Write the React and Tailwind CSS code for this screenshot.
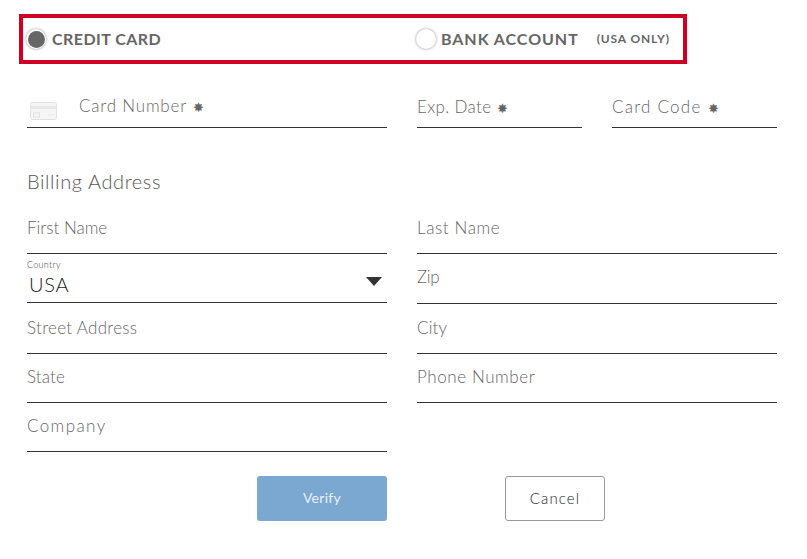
const font = { fontFamily: '"Lato", "Liberation Sans", sans-serif' };

function Star() {
  return <span className="ml-[6px] text-[13px] font-normal leading-none tracking-normal text-[#666]">✸</span>;
}

function Field({ label, h = "h-[49px]", pt = "pt-[12px]", track = "tracking-[0.5px]" }) {
  return (
    <div className={`${h} ${pt} border-b border-[#333] text-[17px] font-light leading-[22px] ${track} text-[#666]`}>
      {label}
    </div>
  );
}

function Radio({ checked }) {
  return (
    <span className="flex h-[20px] w-[20px] shrink-0 items-center justify-center rounded-full bg-white shadow-[0_0_3px_rgba(0,0,0,0.45)]">
      {checked && <span className="h-[17px] w-[17px] rounded-full bg-[#666]" />}
    </span>
  );
}

export default function App() {
  return (
    <div style={font} className="h-[559px] w-[807px] bg-white pl-[27px] pr-[30px] pt-[14px]">
      <div className="-ml-[8px] flex h-[50px] w-[668px] items-center border-[4px] border-[#cf0022] pl-[3px]">
        <div className="flex w-[390px] items-center gap-[6px]">
          <Radio checked />
          <span className="text-[16px] font-bold tracking-[0.45px] text-[#666]">CREDIT CARD</span>
        </div>
        <div className="flex items-center gap-[5px]">
          <Radio />
          <span className="text-[16px] font-bold tracking-[0.95px] text-[#666]">BANK ACCOUNT</span>
          <span className="ml-[13px] text-[12px] font-bold tracking-[0.85px] text-[#666]">(USA ONLY)</span>
        </div>
      </div>

      <div className="mt-[29px] flex gap-[30px]">
        <div className="flex h-[35px] w-[360px] items-start border-b border-[#333] pt-[2px]">
          <svg width="27" height="20" viewBox="0 0 27 20" className="mt-[7px] ml-[3px] shrink-0" fill="none">
            <rect x="0.5" y="0.5" width="26" height="17" rx="2" fill="#f6f6f6" stroke="#e0e0e0" />
            <rect x="1" y="4" width="25" height="3" fill="#e8e8e8" />
            <rect x="3.5" y="11" width="6" height="4" stroke="#e0e0e0" />
            <path d="M18 13h1.5M20.5 13H22M23 13h1.5" stroke="#e0e0e0" />
          </svg>
          <span className="ml-[22px] text-[17px] font-light leading-[22px] tracking-[0.8px] text-[#666]">Card Number<Star /></span>
        </div>
        <div className="flex gap-[30px]">
          <div className="h-[35px] w-[165px] border-b border-[#333] pt-[3px] text-[17px] font-light leading-[22px] tracking-[0.35px] text-[#666]">Exp. Date<Star /></div>
          <div className="h-[35px] w-[165px] border-b border-[#333] pt-[3px] text-[17px] font-light leading-[22px] tracking-[1.25px] text-[#666]">Card Code<Star /></div>
        </div>
      </div>

      <h2 className="mt-[41px] text-[20px] font-light leading-[24px] tracking-[0.6px] text-[#555]">Billing Address</h2>

      <div className="mt-[11px] grid grid-cols-[360px_360px] gap-x-[30px]">
        <Field label="First Name" h="h-[50px]" pt="pt-[13px]" track="tracking-[0px]" />
        <Field label="Last Name" h="h-[50px]" pt="pt-[13px]" track="tracking-[0.6px]" />
        <div className="relative h-[49px] border-b border-[#333] pt-[5px]">
          <div className="text-[9px] font-light leading-[12px] tracking-[0.3px] text-[#444]">Country</div>
          <div className="pl-[2px] pt-[1px] text-[20px] font-light leading-[24px] tracking-[0.7px] text-[#222]">USA</div>
          <span className="absolute right-[5px] top-[23px] h-0 w-0 border-x-[8px] border-t-[9px] border-x-transparent border-t-[#333]" />
        </div>
        <Field label="Zip" h="h-[50px]" pt="pt-[12px]" track="tracking-[-0.3px]" />
        <Field label="Street Address" h="h-[50px]" pt="pt-[13px]" track="tracking-[0.3px]" />
        <Field label="City" h="h-[50px]" pt="pt-[13px]" track="tracking-[0.15px]" />
        <Field label="State" track="tracking-[0.15px]" />
        <Field label="Phone Number" track="tracking-[0.58px]" />
        <Field label="Company" track="tracking-[1.4px]" />
      </div>

      <div className="mt-[24px] flex pl-[230px]">
        <button className="h-[45px] w-[130px] rounded-[3px] bg-[#7ba8d1] pb-[2px] text-[14px] tracking-[0.3px] text-[#e8f0f7]">Verify</button>
        <button className="ml-[118px] h-[45px] w-[100px] rounded-[3px] border border-[#999] bg-white text-[15px] font-light tracking-[1.1px] text-[#222]">Cancel</button>
      </div>
    </div>
  );
}
